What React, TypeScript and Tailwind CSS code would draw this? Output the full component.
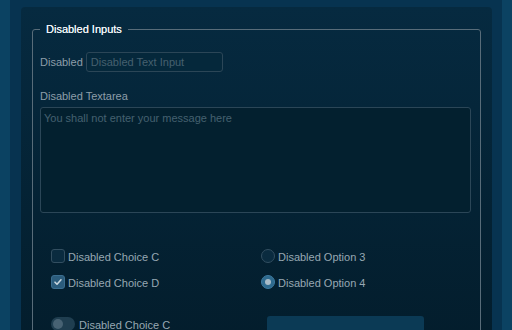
import React from 'react';

const font = { fontFamily: '"Liberation Sans", Arial, sans-serif' };

function Box({ checked }: { checked?: boolean }) {
  return (
    <span
      className={`w-[14px] h-[14px] rounded-[3px] border flex items-center justify-center shrink-0 ${
        checked ? 'bg-[#2b5c7c] border-[#3b6e90]' : 'bg-[#0a2b3f] border-[#324e60]'
      }`}
    >
      {checked && (
        <svg width="10" height="10" viewBox="0 0 10 10" fill="none">
          <path d="M2 5.2l2 2 4-4.4" stroke="#c9d6de" strokeWidth="1.6" strokeLinecap="round" strokeLinejoin="round" />
        </svg>
      )}
    </span>
  );
}

function Radio({ checked }: { checked?: boolean }) {
  return (
    <span
      className={`w-[14px] h-[14px] rounded-full border flex items-center justify-center shrink-0 ${
        checked ? 'bg-[#2e6a8e] border-[#3d7aa0]' : 'bg-[#0a2b3f] border-[#324e60]'
      }`}
    >
      {checked && <span className="w-[6px] h-[6px] rounded-full bg-[#a9bcc8]" />}
    </span>
  );
}

export default function App() {
  return (
    <div className="h-[330px] w-full overflow-hidden bg-[#0b4262] px-[10px]" style={font}>
      <div className="h-full bg-[#073350] pt-[7px] pl-[11px] pr-[10px]">
        <div className="h-[340px] rounded-[4px] bg-gradient-to-b from-[#062a40] to-[#031d2c] pt-[15px] px-[11px]">
          <fieldset className="border border-[#586c79] rounded-[3px] pl-[7px] pr-[9px] pt-[16px] pb-4">
            <legend className="px-[6px] text-[11px] leading-[14px] text-[#eef3f6] [text-shadow:0_0_0.4px_#eef3f6]">
              Disabled Inputs
            </legend>

            <div className="flex items-center gap-[3px]">
              <span className="text-[11px] text-[#8d9ea9]">Disabled</span>
              <input
                disabled
                placeholder="Disabled Text Input"
                className="w-[137px] h-[20px] rounded-[3px] border border-[#2b4657] bg-[#05283b] px-[4px] text-[11px] placeholder:text-[#45606f] outline-none"
              />
            </div>

            <div className="mt-[17px] text-[11px] leading-[14px] text-[#8d9ea9]">Disabled Textarea</div>
            <textarea
              disabled
              placeholder="You shall not enter your message here"
              className="mt-[4px] block w-full h-[106px] resize-none rounded-[3px] border border-[#2b4657] bg-[#03202f] px-[3px] py-[2px] text-[11px] placeholder:text-[#45606f] outline-none"
            />

            <div className="mt-[36px] grid grid-cols-[210px_1fr] gap-y-[12px] pl-[11px] text-[11px] text-[#97a8b3]">
              <label className="flex items-center gap-[3px] h-[14px]">
                <Box />
                <span className="mt-[2px]">Disabled Choice C</span>
              </label>
              <label className="flex items-center gap-[3px] h-[14px]">
                <Radio />
                <span className="mt-[2px]">Disabled Option 3</span>
              </label>
              <label className="flex items-center gap-[3px] h-[14px]">
                <Box checked />
                <span className="mt-[2px]">Disabled Choice D</span>
              </label>
              <label className="flex items-center gap-[3px] h-[14px]">
                <Radio checked />
                <span className="mt-[2px]">Disabled Option 4</span>
              </label>
            </div>

            <div className="mt-[27px] grid grid-cols-[216px_1fr] pl-[11px] text-[11px] text-[#97a8b3]">
              <label className="flex items-center gap-[4px] h-[14px] mt-[1px]">
                <span className="w-[24px] h-[14px] rounded-full bg-[#1f3e50] flex items-center px-[2px]">
                  <span className="w-[10px] h-[10px] rounded-full bg-[#476273]" />
                </span>
                <span className="mt-[2px]">Disabled Choice C</span>
              </label>
              <button
                disabled
                className="w-[157px] h-[30px] rounded-[3px] bg-[#0b3a55] text-[11px] text-[#4f6371] pt-[10px]"
              >
                I am disabled, don't click
              </button>
            </div>
          </fieldset>
        </div>
      </div>
    </div>
  );
}
